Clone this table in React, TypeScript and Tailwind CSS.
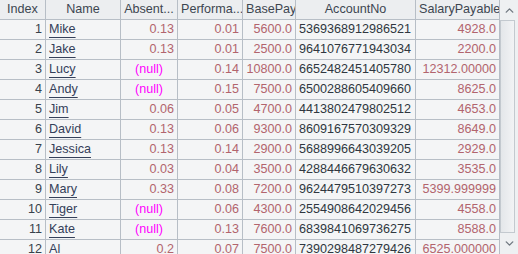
import { ChevronUp, ChevronDown } from 'lucide-react'

type Row = [number, string, string | null, string, string, string, string]

const rows: Row[] = [
  [1, 'Mike', '0.13', '0.01', '5600.0', '5369368912986521', '4928.0'],
  [2, 'Jake', '0.13', '0.01', '2500.0', '9641076771943034', '2200.0'],
  [3, 'Lucy', null, '0.14', '10800.0', '6652482451405780', '12312.00000'],
  [4, 'Andy', null, '0.15', '7500.0', '6500288605409660', '8625.0'],
  [5, 'Jim', '0.06', '0.05', '4700.0', '4413802479802512', '4653.0'],
  [6, 'David', '0.13', '0.06', '9300.0', '8609167570309329', '8649.0'],
  [7, 'Jessica', '0.13', '0.14', '2900.0', '5688996643039205', '2929.0'],
  [8, 'Lily', '0.03', '0.04', '3500.0', '4288446679630632', '3535.0'],
  [9, 'Mary', '0.33', '0.08', '7200.0', '9624479510397273', '5399.999999'],
  [10, 'Tiger', null, '0.06', '4300.0', '2554908642029456', '4558.0'],
  [11, 'Kate', null, '0.13', '7600.0', '6839841069736275', '8588.0'],
  [12, 'Al', '0.2', '0.07', '7500.0', '7390298487279426', '6525.000000'],
]

const cell = 'h-[20px] shrink-0 border-r border-b border-[#b7bec6] px-[3px] leading-[19px] whitespace-nowrap overflow-hidden'
const num = 'text-right text-[#b2646d]'

export default function App() {
  return (
    <div className="flex w-[518px] h-[254px] overflow-hidden bg-[#f4f5f6] text-[12.6px] text-[#38414b]" style={{ fontFamily: '"Liberation Sans", Arial, sans-serif' }}>
      <div className="w-[500px] shrink-0">
        <div className="flex bg-[#eceef0] text-[#3d4650]">
          <div className={`${cell} w-[46px] text-center`}>Index</div>
          <div className={`${cell} w-[75px] text-center`}>Name</div>
          <div className={`${cell} w-[57px] text-center`}>Absent...</div>
          <div className={`${cell} w-[65px] text-center`}>Performa...</div>
          <div className={`${cell} w-[53px] text-center`}>BasePay</div>
          <div className={`${cell} w-[120px] text-center`}>AccountNo</div>
          <div className={`${cell} w-[84px] text-center`}>SalaryPayable</div>
        </div>
        {rows.map((r) => (
          <div key={r[0]} className="flex">
            <div className={`${cell} w-[46px] text-right`}>{r[0]}</div>
            <div className={`${cell} w-[75px] text-[#34405a]`}>
              <span className="underline decoration-[#34405a] underline-offset-[4px]">{r[1]}</span>
            </div>
            {r[2] === null ? (
              <div className={`${cell} w-[57px] text-center text-[#ff00ff]`}>(null)</div>
            ) : (
              <div className={`${cell} w-[57px] ${num}`}>{r[2]}</div>
            )}
            <div className={`${cell} w-[65px] ${num}`}>{r[3]}</div>
            <div className={`${cell} w-[53px] ${num}`}>{r[4]}</div>
            <div className={`${cell} w-[120px] text-[#2f3740]`}>{r[5]}</div>
            <div className={`${cell} w-[84px] ${num}`}>{r[6]}</div>
          </div>
        ))}
      </div>
      <div className="w-[18px] h-full flex flex-col bg-[#eef0f2]">
        <div className="h-[20px] flex items-center justify-center text-[#707880]">
          <ChevronUp size={13} strokeWidth={2.5} />
        </div>
        <div className="flex-1 flex">
          <div className="w-[15px] h-full border border-[#c3c9cf] bg-gradient-to-r from-[#e4e7ea] to-[#f2f3f5]" />
        </div>
        <div className="h-[21px] flex items-center justify-center text-[#707880]">
          <ChevronDown size={13} strokeWidth={2.5} />
        </div>
      </div>
    </div>
  )
}
